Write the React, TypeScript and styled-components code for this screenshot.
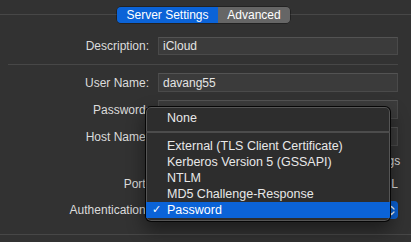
import React from 'react';
import styled, { createGlobalStyle } from 'styled-components';

const Global = createGlobalStyle`
  * { box-sizing: border-box; }
  body { margin: 0; background: #323232; }
`;

const Page = styled.div`
  position: relative;
  width: 411px;
  height: 242px;
  overflow: hidden;
  background: #323232;
  padding-top: 7px;
  font-family: "Liberation Sans", Arial, sans-serif;
  font-size: 12px;
  color: #dcdcdc;
`;

const TabsRow = styled.div`
  position: relative;
  z-index: 1;
  display: flex;
  justify-content: center;
  padding-right: 4px;
  height: 16px;
`;

const Segmented = styled.div`
  display: flex;
  border-radius: 4px;
  overflow: hidden;
  box-shadow: 0 0 0 0.5px rgba(0, 0, 0, 0.6);
`;

const Segment = styled.div<{ $w: number; $on?: boolean }>`
  width: ${p => p.$w}px;
  line-height: 16px;
  text-align: center;
  color: #fff;
  background: ${p => (p.$on ? '#0b63d7' : '#666666')};
`;

const TabBox = styled.div`
  margin-top: -9px;
  height: 221px;
  border-top: 1px solid #474747;
  border-bottom: 1px solid #474747;
  padding: 22px 13px 0 8px;
`;

const Row = styled.div<{ $h: number; $mt?: number }>`
  display: grid;
  grid-template-columns: 141px 1fr;
  column-gap: 9px;
  align-items: center;
  height: ${p => p.$h}px;
  margin-top: ${p => p.$mt ?? 0}px;
`;

const Label = styled.div`
  text-align: right;
  white-space: nowrap;
`;

const Field = styled.div<{ $w?: number }>`
  height: 100%;
  width: ${p => (p.$w ? `${p.$w}px` : 'auto')};
  background: #3b3b3b;
  border: 1px solid #4a4a4a;
  border-top-color: #535353;
  padding: 0 4px;
  display: flex;
  align-items: center;
  color: #e4e4e4;
`;

const Divider = styled.div`
  margin-top: 9px;
  border-top: 1px solid #474747;
`;

const Inline = styled.div`
  display: flex;
  align-items: center;
  height: 100%;
`;

const Check = styled.label<{ $right?: boolean; $mr?: number }>`
  display: flex;
  align-items: center;
  gap: 5px;
  white-space: nowrap;
  margin-left: ${p => (p.$right ? 'auto' : '0')};
  margin-right: ${p => p.$mr ?? 0}px;
  &::before {
    content: "";
    width: 13px;
    height: 13px;
    border-radius: 3px;
    background: #0b63d7;
  }
`;

const Popup = styled.div`
  height: 100%;
  border-radius: 4px;
  background: #0b63d7;
  color: #fff;
  display: flex;
  align-items: center;
  justify-content: space-between;
  padding: 0 3px 0 8px;
`;

const Menu = styled.div`
  position: absolute;
  left: 145px;
  top: 106px;
  width: 246px;
  padding: 3px 0;
  background: #2d2d2d;
  border: 1px solid rgba(0, 0, 0, 0.85);
  border-radius: 6px;
  box-shadow: inset 0 0 0 1px #555555, 0 8px 18px rgba(0, 0, 0, 0.45);
  overflow: hidden;
  z-index: 2;
  font-size: 12.5px;
`;

const Item = styled.div<{ $active?: boolean }>`
  position: relative;
  height: 16px;
  line-height: 16px;
  padding-left: 21px;
  color: ${p => (p.$active ? '#fff' : '#e8e8e8')};
  background: ${p => (p.$active ? '#0b63d7' : 'transparent')};
`;

const Tick = styled.span`
  position: absolute;
  left: 6px;
  top: 0;
  font-family: "DejaVu Sans", sans-serif;
  font-size: 11px;
`;

const MenuSep = styled.div`
  height: 12px;
  display: flex;
  align-items: center;
  &::after {
    content: "";
    flex: 1;
    border-top: 2px solid #4c4c4c;
  }
`;

const Chevrons = () => (
  <svg width="7" height="11" viewBox="0 0 7 11" fill="none" stroke="#fff" strokeWidth="1.3" strokeLinecap="round" strokeLinejoin="round">
    <polyline points="1,4 3.5,1.5 6,4" />
    <polyline points="1,7 3.5,9.5 6,7" />
  </svg>
);

const items = [
  'External (TLS Client Certificate)',
  'Kerberos Version 5 (GSSAPI)',
  'NTLM',
  'MD5 Challenge-Response',
];

export default function App() {
  return (
    <Page>
      <Global />
      <TabsRow>
        <Segmented>
          <Segment $w={101} $on>Server Settings</Segment>
          <Segment $w={72}>Advanced</Segment>
        </Segmented>
      </TabsRow>
      <TabBox>
        <Row $h={18}>
          <Label>Description:</Label>
          <Field>iCloud</Field>
        </Row>
        <Divider />
        <Row $h={19} $mt={8}>
          <Label>User Name:</Label>
          <Field>davang55</Field>
        </Row>
        <Row $h={19} $mt={8}>
          <Label>Password:</Label>
          <Field>••••••••</Field>
        </Row>
        <Row $h={19} $mt={8}>
          <Label>Host Name:</Label>
          <Field>imap.mail.me.com</Field>
        </Row>
        <Row $h={16} $mt={7}>
          <span />
          <Inline>
            <Check $right $mr={2}>Automatically manage connection settings</Check>
          </Inline>
        </Row>
        <Row $h={18} $mt={6}>
          <Label>Port:</Label>
          <Inline>
            <Field $w={52}>993</Field>
            <Check $right>Use TLS/SSL</Check>
          </Inline>
        </Row>
        <Row $h={18} $mt={8}>
          <Label>Authentication:</Label>
          <Popup>
            <span>Password</span>
            <Chevrons />
          </Popup>
        </Row>
      </TabBox>
      <Menu>
        <Item>None</Item>
        <MenuSep />
        {items.map(t => (
          <Item key={t}>{t}</Item>
        ))}
        <Item $active>
          <Tick>✓</Tick>
          Password
        </Item>
      </Menu>
    </Page>
  );
}
